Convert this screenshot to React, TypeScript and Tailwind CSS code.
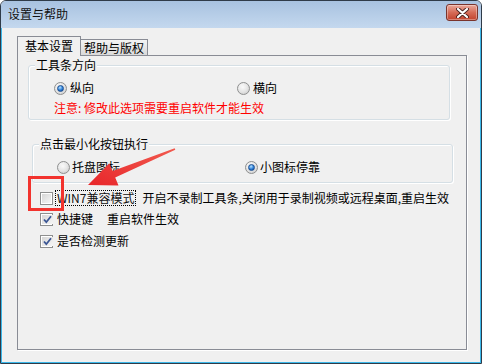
import React from "react";

const font = { fontFamily: '"Noto Sans CJK SC", "Liberation Sans", sans-serif' };

function Radio({ checked }: { checked?: boolean }) {
  return (
    <span className="w-[13px] h-[13px] rounded-full border border-[#8e8f8f] bg-[radial-gradient(circle_at_40%_35%,#ffffff,#e2e2e2_55%,#c4c4c4)] flex items-center justify-center shrink-0">
      {checked ? (
        <span className="w-[7px] h-[7px] rounded-full bg-[radial-gradient(circle_at_40%_30%,#b6e2ff,#2c7fd8_55%,#0b3e8a)] border border-[#1d4f91]" />
      ) : (
        <span className="w-[7px] h-[7px] rounded-full bg-[radial-gradient(circle_at_40%_30%,#fafafa,#dcdcdc)]" />
      )}
    </span>
  );
}

function Checkbox({ checked }: { checked?: boolean }) {
  return (
    <span className="w-[13px] h-[13px] border border-[#8e8f8f] bg-white p-px shrink-0 flex">
      <span className="flex-1 bg-[linear-gradient(135deg,#d6d6d6,#f6f6f6)] flex items-center justify-center">
        {checked && (
          <svg width="11" height="11" viewBox="0 0 11 11">
            <path d="M2 5.5 L4.3 8.2 L9 2.2" fill="none" stroke="#3b5694" strokeWidth="1.8" />
          </svg>
        )}
      </span>
    </span>
  );
}

function GroupBox({ title, className, children }: { title: string; className: string; children: React.ReactNode }) {
  return (
    <div className={`relative border border-[#d5dfe5] rounded-[3px] shadow-[inset_1px_1px_0_#ffffff,1px_1px_0_#ffffff] ${className}`}>
      <span className="absolute -top-[8px] left-[6px] px-px bg-[#f0f0f0] leading-[14px]">{title}</span>
      {children}
    </div>
  );
}

export default function App() {
  return (
    <div
      className="relative w-[482px] h-[364px] flex flex-col border border-[#2f3b48] rounded-t-[6px] overflow-hidden bg-[#f0f0f0] text-[12px] text-black"
      style={font}
    >
      {/* title bar */}
      <div className="h-[27px] flex items-start bg-[linear-gradient(#a8c2e0,#c4d8ee)] shrink-0">
        <span className="mt-[6px] ml-[7px] leading-[14px] text-[#111]">设置与帮助</span>
        <button className="ml-auto mt-[3px] mr-[3px] w-[32px] h-[17px] rounded-[3px] border border-[#7a342c] bg-[linear-gradient(#eaa99b,#d56b57_50%,#c2432e)] shadow-[inset_0_0_0_1px_rgba(255,255,255,0.35)] flex items-center justify-center">
          <svg width="13" height="10" viewBox="0 0 13 10">
            <path d="M2 1 L11 9 M11 1 L2 9" stroke="#4a2420" strokeWidth="4" strokeLinecap="round" />
            <path d="M2 1 L11 9 M11 1 L2 9" stroke="#ffffff" strokeWidth="2.2" strokeLinecap="round" />
          </svg>
        </button>
      </div>

      {/* client area */}
      <div className="flex-1 border-x border-b border-[#3bb8ea] pl-[15px] pt-[8px]">
        {/* tabs */}
        <div className="flex items-end h-[19px]">
          <div className="relative z-10 w-[64px] h-[20px] -mb-px border border-b-0 border-[#898c95] bg-[#f0f0f0] flex items-start justify-center pt-[2px] leading-[14px]">
            基本设置
          </div>
          <div className="w-[67px] h-[16px] border border-l-0 border-b-0 border-[#898c95] bg-[linear-gradient(#f4f4f4,#d9d9d9)] flex items-center justify-center leading-[14px]">
            帮助与版权
          </div>
        </div>

        {/* panel */}
        <div className="w-[450px] h-[295px] border border-[#898c95] shadow-[1px_1px_0_#ffffff] bg-[#f0f0f0] flex flex-col">
          <GroupBox title="工具条方向" className="ml-[10px] mt-[9px] w-[422px] h-[55px] pt-[15px] pl-[25px]">
            <div className="flex items-center h-[14px]">
              <label className="w-[183px] flex items-center gap-[3px] leading-[14px]">
                <Radio checked />
                纵向
              </label>
              <label className="flex items-center gap-[3px] leading-[14px]">
                <Radio />
                横向
              </label>
            </div>
            <div className="mt-[6px] leading-[14px] text-[#ff0000]">注意: 修改此选项需要重启软件才能生效</div>
          </GroupBox>

          <GroupBox title="点击最小化按钮执行" className="ml-[14px] mt-[24px] w-[421px] h-[39px] pt-[15px] pl-[24px]">
            <div className="flex items-center h-[14px]">
              <label className="w-[188px] flex items-center gap-[2px] leading-[14px]">
                <Radio />
                托盘图标
              </label>
              <label className="flex items-center gap-[2px] leading-[14px]">
                <Radio checked />
                小图标停靠
              </label>
            </div>
          </GroupBox>

          <div className="ml-[22px] mt-[7px] flex flex-col">
            <div className="flex items-center h-[16px]">
              <Checkbox />
              <span className="ml-[2px] h-[16px] px-px border border-dotted border-black leading-[14px] text-[#111]">WIN7兼容模式</span>
              <span className="ml-[6px] leading-[14px]">开启不录制工具条,关闭用于录制视频或远程桌面,重启生效</span>
            </div>
            <div className="flex items-center h-[16px] mt-[5px]">
              <Checkbox checked />
              <span className="ml-[4px] leading-[14px]">快捷键</span>
              <span className="ml-[14px] leading-[14px]">重启软件生效</span>
            </div>
            <div className="flex items-center h-[16px] mt-[6px]">
              <Checkbox checked />
              <span className="ml-[4px] leading-[14px]">是否检测更新</span>
            </div>
          </div>
        </div>
      </div>

      {/* annotation overlay */}
      <div className="absolute left-[27px] top-[175px] w-[36px] h-[35px] border-[3px] border-[#f2332e]" />
      <svg className="absolute left-0 top-0 pointer-events-none" width="482" height="364">
        <defs>
          <linearGradient id="arr" x1="1" y1="0" x2="0" y2="1">
            <stop offset="0" stopColor="#f15a4f" />
            <stop offset="1" stopColor="#e8262a" />
          </linearGradient>
        </defs>
        <polygon
          points="173.7,147.3 111.6,170.1 108.3,162.2 87,184 117.5,184.4 114.2,176.5 174.3,148.7"
          fill="url(#arr)"
        />
      </svg>
    </div>
  );
}
